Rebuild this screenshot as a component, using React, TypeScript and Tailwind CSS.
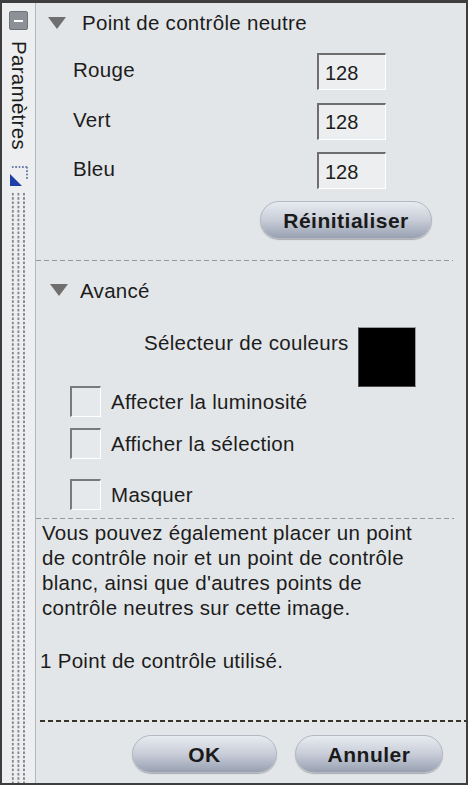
import React from 'react'

function Triangle() {
  return <div className="w-0 h-0 border-l-[9px] border-r-[9px] border-t-[12px] border-l-transparent border-r-transparent border-t-[#6f6f6f]" />
}

function NumberBox({ value }: { value: string }) {
  return (
    <div className="w-[69px] h-[37px] bg-[#eceeef] border-t-2 border-l-2 border-t-[#6e6e6e] border-l-[#6e6e6e] border-b border-r border-b-white border-r-white flex items-center pl-[6px] pt-[2px] text-[20px] tracking-normal">
      {value}
    </div>
  )
}

function CheckBox() {
  return <div className="w-[31px] h-[31px] bg-[#e6e9eb] border-t-2 border-l-2 border-t-[#7a7a7a] border-l-[#7a7a7a] border-b border-r border-b-white border-r-white" />
}

function PillButton({ label, width }: { label: string; width: string }) {
  return (
    <button
      className={`${width} h-[38px] rounded-full bg-linear-to-b from-[#e8ebf0] via-[#c8cdd8] to-[#98a0b1] border border-[#b3b8c2] shadow-[0_1px_1px_rgba(0,0,0,0.25)] text-[21px] font-bold tracking-[0.5px] text-[#1a1a1a] flex items-center justify-center`}
    >
      {label}
    </button>
  )
}

export default function App() {
  const rows = ['Rouge', 'Vert', 'Bleu']
  const checks = [
    { label: 'Affecter la luminosité', mt: 'mt-0' },
    { label: 'Afficher la sélection', mt: 'mt-[11px]' },
    { label: 'Masquer', mt: 'mt-[20px]' },
  ]

  return (
    <div className="w-[470px] h-[787px] bg-white font-['Liberation_Sans',Arial,sans-serif] text-[#1c1c1c] text-[20.5px] tracking-[0.3px] leading-[25px]">
      <div className="w-[468px] h-[785px] border-2 border-[#3e3e3e] border-t-[3px] flex bg-[#e3e6e8]">
        {/* Side strip */}
        <div className="w-[34px] shrink-0 bg-[#eceef0] border-r border-[#b4b8bc] flex flex-col items-center">
          <div className="mt-[8px] w-[19px] h-[19px] rounded-[2px] bg-[#8d9197] border border-[#6f737a] flex items-center justify-center">
            <div className="w-[9px] h-[2px] bg-white" />
          </div>
          <div className="mt-[11px] [writing-mode:vertical-rl] h-[112px] leading-[20px]">Paramètres</div>
          <div className="mt-[13px] relative w-[18px] h-[20px]">
            <div className="absolute top-0 left-[1px] w-[17px] h-[2px] bg-[radial-gradient(circle,#6d7ea8_0.8px,transparent_1px)] bg-[length:3.4px_2px]" />
            <div className="absolute top-0 right-0 w-[2px] h-[14px] bg-[radial-gradient(circle,#6d7ea8_0.8px,transparent_1px)] bg-[length:2px_3.4px]" />
            <svg className="absolute left-0 bottom-0" width="12" height="12" viewBox="0 0 12 12">
              <polygon points="0,0 0,12 12,12" fill="#1f3fa8" />
            </svg>
          </div>
          <div className="mt-[6px] flex-1 w-[17px] bg-[radial-gradient(circle,#84888e_1px,transparent_1.3px)] bg-[length:5.6px_4.3px]" />
        </div>

        {/* Main panel */}
        <div className="flex-1 flex flex-col">
          <div className="h-[39px] flex items-center pl-[12px] gap-[16px]">
            <Triangle />
            <span>Point de contrôle neutre</span>
          </div>

          <div className="mt-[11px] flex flex-col gap-[12.5px]">
            {rows.map((r) => (
              <div key={r} className="flex items-center justify-between pl-[37px] pr-[80px]">
                <span className="pb-[4px]">{r}</span>
                <NumberBox value="128" />
              </div>
            ))}
          </div>

          <div className="mt-[12px] flex justify-end pr-[34px]">
            <PillButton label="Réinitialiser" width="w-[172px]" />
          </div>

          <div className="mt-[21px] mr-[13px] h-px bg-[linear-gradient(to_right,#979797_62%,transparent_62%)] bg-[length:8px_1px]" />

          <div className="mt-[12px] h-[34px] flex items-center pl-[14px] gap-[12px]">
            <Triangle />
            <span>Avancé</span>
          </div>

          <div className="mt-[20px] flex items-start pl-[108px]">
            <span className="pt-[3px]">Sélecteur de couleurs</span>
            <div className="ml-[9px] w-[58px] h-[60px] bg-black border border-[#4a4a4a] border-t-[#9a9a9a] border-r-[#9a9a9a]" />
          </div>

          <div className="-mt-[1px] flex flex-col pl-[34px]">
            {checks.map((c) => (
              <div key={c.label} className={`flex items-center gap-[10px] ${c.mt}`}>
                <CheckBox />
                <span>{c.label}</span>
              </div>
            ))}
          </div>

          <div className="mt-[8px] mr-[12px] h-px bg-[linear-gradient(to_right,#979797_62%,transparent_62%)] bg-[length:8px_1px]" />

          <p className="mt-[1px] pl-[6px]">
            Vous pouvez également placer un point
            <br />
            de contrôle noir et un point de contrôle
            <br />
            blanc, ainsi que d'autres points de
            <br />
            contrôle neutres sur cette image.
          </p>

          <p className="mt-[28px] pl-[4px]">1 Point de contrôle utilisé.</p>

          <div className="mt-auto">
            <div className="ml-[4px] h-[2px] bg-[linear-gradient(to_right,#3a3224_65%,transparent_65%)] bg-[length:8px_2px]" />
            <div className="mt-[13px] pb-[10px] flex justify-end gap-[18px] pr-[23px]">
              <PillButton label="OK" width="w-[145px]" />
              <PillButton label="Annuler" width="w-[148px]" />
            </div>
          </div>
        </div>
      </div>
    </div>
  )
}
